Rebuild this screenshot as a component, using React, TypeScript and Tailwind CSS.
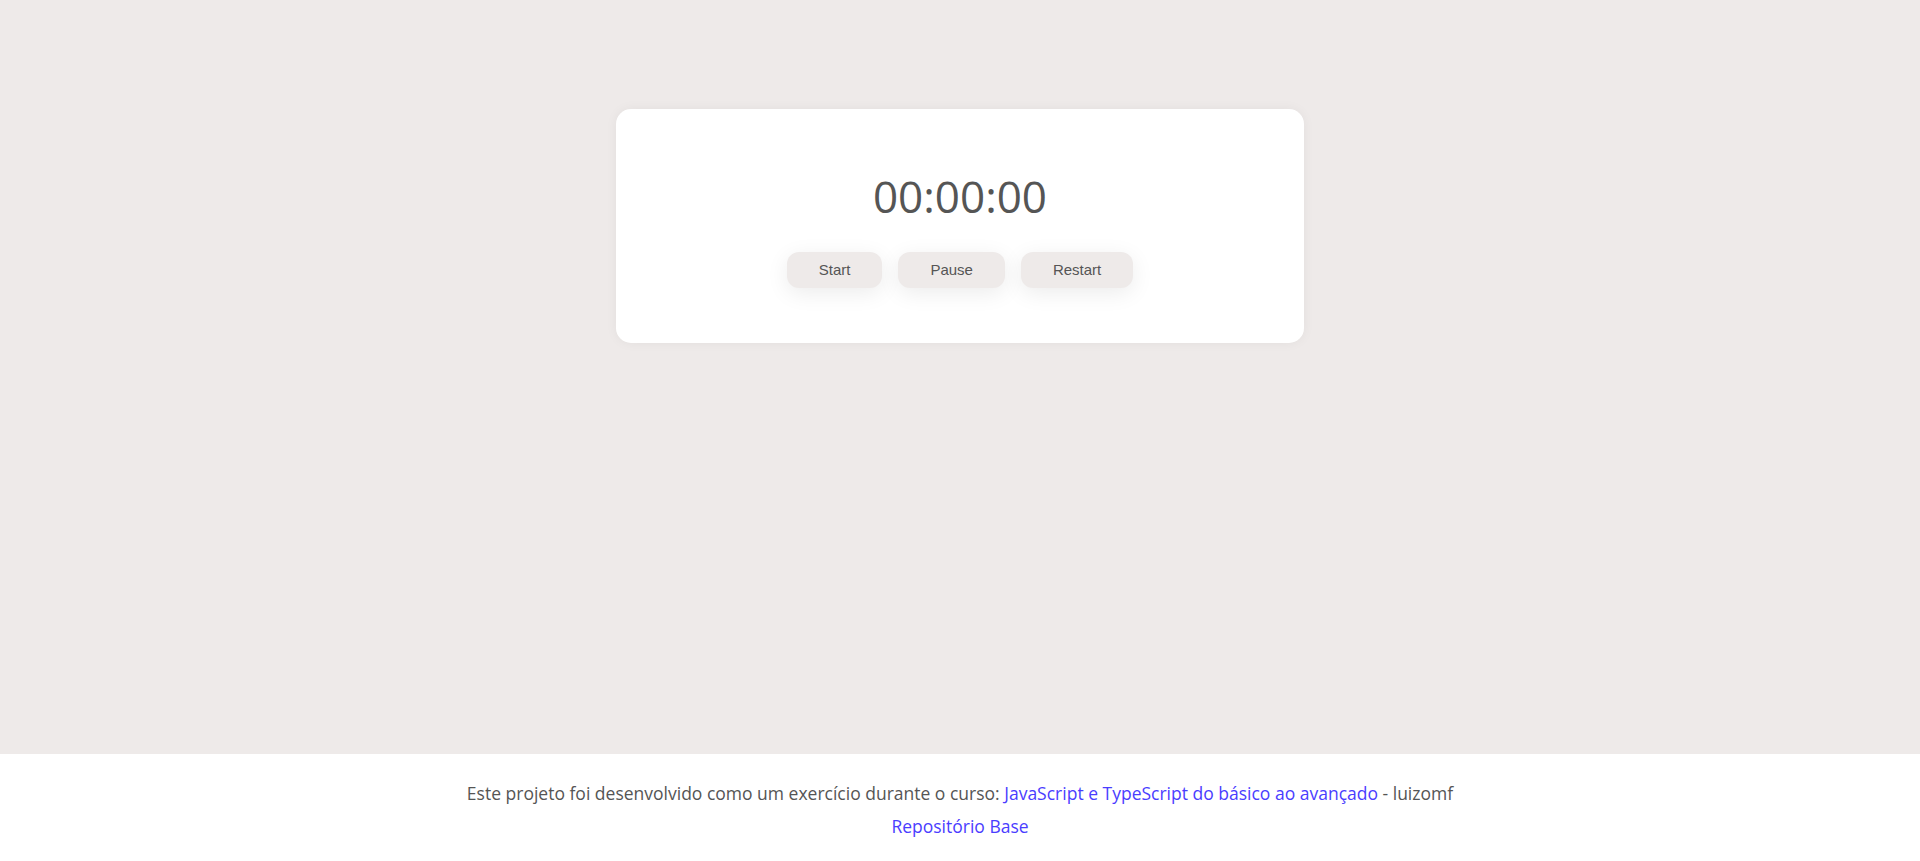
import React from "react";

export default function App() {
  return (
    <div className="min-h-screen flex flex-col bg-[#eeeae9] text-[#555555]" style={{ fontFamily: '"Open Sans", sans-serif' }}>
      <main className="flex-1 flex flex-col items-center pt-[109px]">
        <section className="w-[688px] bg-white rounded-[15px] shadow-[0_0_12px_rgba(0,0,0,0.05)] pt-[57px] pb-[55px] flex flex-col items-center">
          <div className="text-[44px] leading-[60px] text-[#555555]" style={{ fontFamily: '"Open Sans", sans-serif' }}>
            00:00:00
          </div>
          <div className="mt-[26px] flex gap-4">
            {["Start", "Pause", "Restart"].map((l) => (
              <button
                key={l}
                className="h-[36px] px-8 rounded-[12px] bg-[#eeeae9] text-[#555555] text-[15px] shadow-[0_5px_22px_rgba(0,0,0,0.08)]"
                style={{ fontFamily: '"Liberation Sans", Arial, sans-serif' }}
              >
                {l}
              </button>
            ))}
          </div>
        </section>
      </main>
      <footer className="h-[107px] bg-white flex flex-col items-center pt-[27px] text-[17.5px] leading-[24px] text-[#555555]">
        <p>
          Este projeto foi desenvolvido como um exercício durante o curso:{" "}
          <a href="#" className="text-[#4a3dff]">JavaScript e TypeScript do básico ao avançado</a> - luizomf
        </p>
        <p className="mt-[9px]">
          <a href="#" className="text-[#4a3dff]">Repositório Base</a>
        </p>
      </footer>
    </div>
  );
}
